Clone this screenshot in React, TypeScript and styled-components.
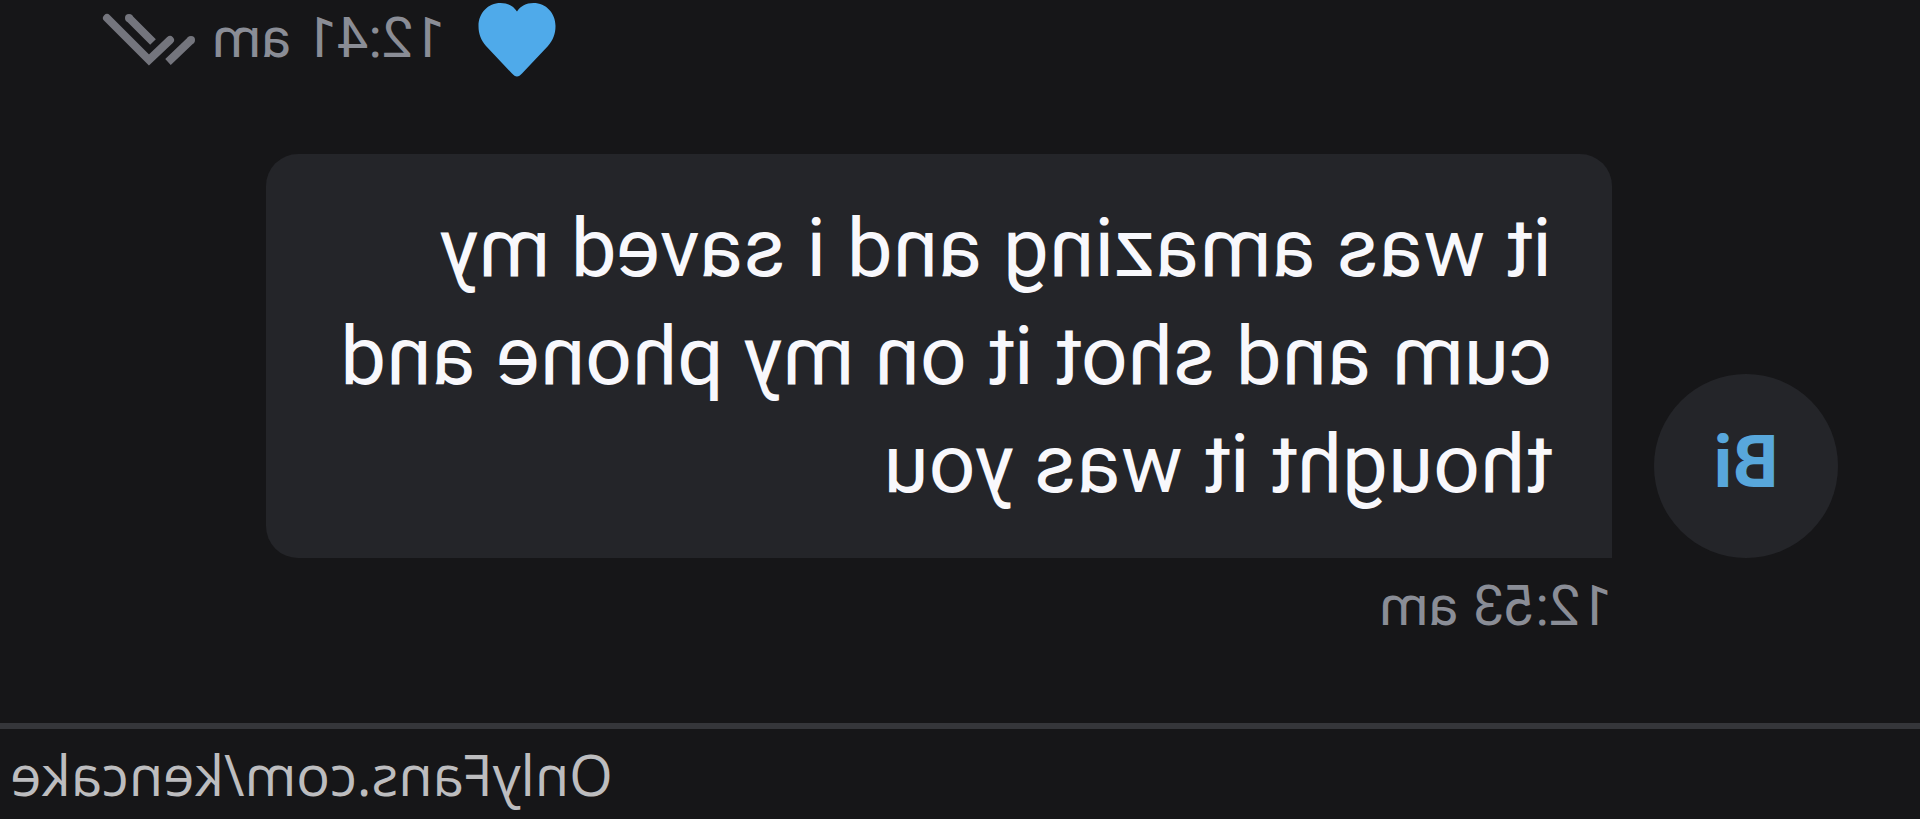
import React from "react";
import styled, { createGlobalStyle } from "styled-components";

const GlobalStyle = createGlobalStyle`
  * { box-sizing: border-box; }
  body {
    margin: 0;
    background: #161618;
    overflow-x: hidden;
  }
`;

/* The whole conversation is shown flipped left to right. */
const Page = styled.main`
  display: flex;
  flex-direction: column;
  min-height: 100vh;
  background: #161618;
  color: #f8f8fc;
  font-family: Roboto, "Liberation Sans", sans-serif;
  transform: scaleX(-1);
`;

const Thread = styled.section`
  display: flex;
  flex-direction: column;
  flex: 1;
`;

const SentMeta = styled.div`
  display: flex;
  justify-content: flex-end;
  align-items: flex-start;
  padding-right: 102px;
`;

const Time = styled.time`
  color: #8a8d96;
  font-size: 56px;
  line-height: 76px;
`;

const Heart = styled.svg`
  width: 80px;
  height: 80px;
  margin-right: 32px;
  fill: #4faaea;
`;

const Checks = styled.svg`
  width: 94px;
  height: 80px;
  margin-left: 16px;
  fill: #74757d;
`;

const CheckStroke = styled.path`
  fill: none;
  stroke: #74757d;
  stroke-width: 8;
`;

const Received = styled.article`
  display: grid;
  grid-template-columns: 184px 1fr;
  column-gap: 42px;
  align-items: end;
  margin-top: 74px;
  padding: 0 266px 0 82px;
`;

const Avatar = styled.div`
  display: flex;
  align-items: center;
  justify-content: center;
  height: 184px;
  padding-bottom: 6px;
  border-radius: 50%;
  background: #242529;
  color: #58a7db;
  font-size: 72px;
  font-weight: 700;
  line-height: 84px;
`;

const Bubble = styled.p`
  margin: 0;
  padding: 40px 60px;
  border-radius: 32px 32px 32px 0;
  background: #242529;
  font-size: 82px;
  line-height: 108px;
`;

const ReceivedTime = styled(Time)`
  grid-column: 2;
  padding-top: 10px;
`;

const Footer = styled.footer`
  padding: 10px 10px;
  border-top: 6px solid #35363a;
  color: #bdbdbf;
  font-family: "Open Sans", "Noto Sans", sans-serif;
  font-size: 56px;
  line-height: 70px;
  text-align: right;
`;

export default function App() {
  return (
    <>
      <GlobalStyle />
      <Page>
        <Thread>
          <SentMeta>
            <Heart viewBox="0 0 80 80" role="img" aria-label="Liked">
              <path d="M40 76.5 C38 76.5 37 75.5 35 73.5 L9 46 C4 40 1.500 34 1.500 26 C1.500 13 11 3 23.500 3 C31 3 36.500 6 40 11.500 C43.500 6 49 3 56.500 3 C69 3 78.500 13 78.500 26 C78.500 34 76 40 71 46 L45 73.500 C43 75.500 42 76.500 40 76.500 Z" />
            </Heart>
            <Time>12:41 am</Time>
            <Checks viewBox="0 0 94 80" role="img" aria-label="Read">
              <CheckStroke strokeLinecap="round" d="M26 40 L47 60 L89 18" />
              <CheckStroke d="M5 40 L28 62 M43 42 L67 18" />
              <circle cx="5" cy="40" r="4" />
              <circle cx="67" cy="18" r="4" />
            </Checks>
          </SentMeta>
          <Received>
            <Avatar>Bi</Avatar>
            <Bubble>it was amazing and i saved my cum and shot it on my phone and thought it was you</Bubble>
            <ReceivedTime>12:53 am</ReceivedTime>
          </Received>
        </Thread>
        <Footer>OnlyFans.com/kencake</Footer>
      </Page>
    </>
  );
}
